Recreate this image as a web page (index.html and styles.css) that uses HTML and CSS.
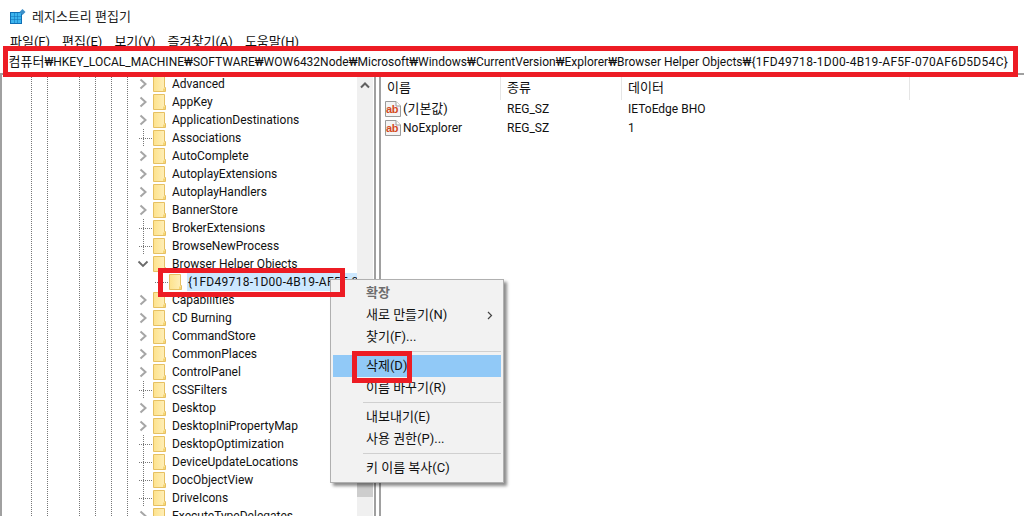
FILE: index.html
```html
<!DOCTYPE html>
<html lang="ko">
<head>
<meta charset="utf-8">
<title>레지스트리 편집기</title>
<link rel="stylesheet" href="styles.css">
</head>
<body>
<svg class="defs" width="0" height="0" aria-hidden="true">
  <defs>
    <linearGradient id="fg" x1="0" y1="0" x2="1" y2="0">
      <stop offset="0" stop-color="#fde28c"/><stop offset="1" stop-color="#fff0bd"/>
    </linearGradient>
    <symbol id="folder" viewBox="0 0 13 16">
      <path d="M.5.5H11.5V11.5H12.5V15.5H.5Z" fill="url(#fg)" stroke="#e6c062"/>
      <path d="M10 15V12.5H12V15Z" fill="#f6d675"/>
    </symbol>
    <symbol id="closed" viewBox="0 0 10 12"><path d="M2.5 1.5 7.5 6 2.5 10.5" fill="none" stroke="#a6a6a6" stroke-width="2"/></symbol>
    <symbol id="open" viewBox="0 0 12 10"><path d="M1.5 2.5 6 7 10.5 2.5" fill="none" stroke="#6a6a6a" stroke-width="1.8"/></symbol>
    <symbol id="ab" viewBox="0 0 16 16">
      <path d="M.5.5H11L15.5 5V15.5H.5Z" fill="#f4f4f4" stroke="#9a9a9a"/>
      <path d="M11 .5V5H15.5" fill="#fff" stroke="#9a9a9a"/>
    </symbol>
  </defs>
</svg>
<div class="window">
  <header class="titlebar">
    <svg class="appicon" viewBox="0 0 16 15" width="16" height="15" aria-hidden="true">
      <rect x="0" y="3" width="12" height="12" fill="#0f6fb5"/>
      <g fill="#3cb4ee">
        <rect x="1" y="4" width="3" height="3"/><rect x="4.500" y="4" width="3" height="3"/><rect x="8" y="4" width="3" height="3"/>
        <rect x="1" y="7.500" width="3" height="3"/><rect x="4.500" y="7.500" width="3" height="3"/><rect x="8" y="7.500" width="3" height="3"/>
        <rect x="1" y="11" width="3" height="3"/><rect x="4.500" y="11" width="3" height="3"/><rect x="8" y="11" width="3" height="3"/>
      </g>
      <path d="M12.500 0 15.500 3 12.500 6 9.500 3Z" fill="#3d8fc8"/>
    </svg>
    <span class="title">레지스트리 편집기</span>
  </header>
  <nav class="menubar">
    <span>파일(F)</span><span>편집(E)</span><span>보기(V)</span><span>즐겨찾기(A)</span><span>도움말(H)</span>
  </nav>
  <div class="address"><span class="path"><span class="ko">컴퓨터</span>₩HKEY_LOCAL_MACHINE₩SOFTWARE₩WOW6432Node₩Microsoft₩Windows₩CurrentVersion₩Explorer₩Browser Helper Objects₩<span class="guid">{1FD49718-1D00-4B19-AF5F-070AF6D5D54C}</span></span></div>
  <main class="panes">
    <section class="tree">
      <div class="row"><span class="twist"><svg class="chev"><use href="#closed"/></svg></span><svg class="folder"><use href="#folder"/></svg><span class="label">Advanced</span></div>
      <div class="row"><span class="twist"><svg class="chev"><use href="#closed"/></svg></span><svg class="folder"><use href="#folder"/></svg><span class="label">AppKey</span></div>
      <div class="row"><span class="twist"><svg class="chev"><use href="#closed"/></svg></span><svg class="folder"><use href="#folder"/></svg><span class="label">ApplicationDestinations</span></div>
      <div class="row"><span class="twist leaf"></span><svg class="folder"><use href="#folder"/></svg><span class="label">Associations</span></div>
      <div class="row"><span class="twist"><svg class="chev"><use href="#closed"/></svg></span><svg class="folder"><use href="#folder"/></svg><span class="label">AutoComplete</span></div>
      <div class="row"><span class="twist"><svg class="chev"><use href="#closed"/></svg></span><svg class="folder"><use href="#folder"/></svg><span class="label">AutoplayExtensions</span></div>
      <div class="row"><span class="twist"><svg class="chev"><use href="#closed"/></svg></span><svg class="folder"><use href="#folder"/></svg><span class="label">AutoplayHandlers</span></div>
      <div class="row"><span class="twist"><svg class="chev"><use href="#closed"/></svg></span><svg class="folder"><use href="#folder"/></svg><span class="label">BannerStore</span></div>
      <div class="row"><span class="twist leaf"></span><svg class="folder"><use href="#folder"/></svg><span class="label">BrokerExtensions</span></div>
      <div class="row"><span class="twist leaf"></span><svg class="folder"><use href="#folder"/></svg><span class="label">BrowseNewProcess</span></div>
      <div class="row"><span class="twist"><svg class="chevopen"><use href="#open"/></svg></span><svg class="folder"><use href="#folder"/></svg><span class="label">Browser Helper Objects</span></div>
      <div class="row child"><span class="twist leaf"></span><svg class="folder"><use href="#folder"/></svg><span class="label selected guid">{1FD49718-1D00-4B19-AF5F-070AF6D5D54C}</span></div>
      <div class="row"><span class="twist"><svg class="chev"><use href="#closed"/></svg></span><svg class="folder"><use href="#folder"/></svg><span class="label">Capabilities</span></div>
      <div class="row"><span class="twist"><svg class="chev"><use href="#closed"/></svg></span><svg class="folder"><use href="#folder"/></svg><span class="label">CD Burning</span></div>
      <div class="row"><span class="twist"><svg class="chev"><use href="#closed"/></svg></span><svg class="folder"><use href="#folder"/></svg><span class="label">CommandStore</span></div>
      <div class="row"><span class="twist"><svg class="chev"><use href="#closed"/></svg></span><svg class="folder"><use href="#folder"/></svg><span class="label">CommonPlaces</span></div>
      <div class="row"><span class="twist"><svg class="chev"><use href="#closed"/></svg></span><svg class="folder"><use href="#folder"/></svg><span class="label">ControlPanel</span></div>
      <div class="row"><span class="twist leaf"></span><svg class="folder"><use href="#folder"/></svg><span class="label">CSSFilters</span></div>
      <div class="row"><span class="twist"><svg class="chev"><use href="#closed"/></svg></span><svg class="folder"><use href="#folder"/></svg><span class="label">Desktop</span></div>
      <div class="row"><span class="twist"><svg class="chev"><use href="#closed"/></svg></span><svg class="folder"><use href="#folder"/></svg><span class="label">DesktopIniPropertyMap</span></div>
      <div class="row"><span class="twist leaf"></span><svg class="folder"><use href="#folder"/></svg><span class="label">DesktopOptimization</span></div>
      <div class="row"><span class="twist leaf"></span><svg class="folder"><use href="#folder"/></svg><span class="label">DeviceUpdateLocations</span></div>
      <div class="row"><span class="twist leaf"></span><svg class="folder"><use href="#folder"/></svg><span class="label">DocObjectView</span></div>
      <div class="row"><span class="twist leaf"></span><svg class="folder"><use href="#folder"/></svg><span class="label">DriveIcons</span></div>
      <div class="row"><span class="twist"><svg class="chev"><use href="#closed"/></svg></span><svg class="folder"><use href="#folder"/></svg><span class="label">ExecuteTypeDelegates</span></div>
    </section>
    <div class="scrollbar">
      <div class="arrow"><svg viewBox="0 0 10 7" width="10" height="7" aria-hidden="true"><path d="M1 5.500 5 1.500 9 5.500" fill="none" stroke="#606060" stroke-width="2"/></svg></div>
      <div class="thumb"></div>
    </div>
    <div class="splitter"></div>
    <section class="values">
      <div class="headers"><span>이름</span><span>종류</span><span>데이터</span></div>
      <div class="value">
        <span class="name"><span class="abicon"><svg><use href="#ab"/></svg><b>ab</b></span><span class="ko">(기본값)</span></span><span>REG_SZ</span><span>IEToEdge BHO</span>
      </div>
      <div class="value">
        <span class="name"><span class="abicon"><svg><use href="#ab"/></svg><b>ab</b></span>NoExplorer</span><span>REG_SZ</span><span>1</span>
      </div>
    </section>
  </main>
</div>
<div class="menu">
  <div class="item strong">확장</div>
  <div class="item sub">새로 만들기(N)<svg viewBox="0 0 6 9" width="6" height="9" aria-hidden="true"><path d="M1 1 4.500 4.500 1 8" fill="none" stroke="#444" stroke-width="1.200"/></svg></div>
  <div class="item">찾기(F)...</div>
  <div class="sep"></div>
  <div class="item hot">삭제(D)</div>
  <div class="item">이름 바꾸기(R)</div>
  <div class="sep"></div>
  <div class="item">내보내기(E)</div>
  <div class="item">사용 권한(P)...</div>
  <div class="sep"></div>
  <div class="item">키 이름 복사(C)</div>
</div>
<div class="mark mark-address"></div>
<div class="mark mark-key"></div>
<div class="mark mark-delete"></div>
</body>
</html>
```
FILE: styles.css
```css
* { box-sizing: border-box; }
html, body { margin: 0; padding: 0; }
body {
  width: 1024px;
  height: 516px;
  overflow: hidden;
  position: relative;
  background: #fff;
  color: #111;
  font: 12px/18px Roboto, "Noto Sans CJK KR", sans-serif;
}
.ko { font-size: 13px; }
.guid { letter-spacing: .3px; }
.defs { position: absolute; }
.window { display: flex; flex-direction: column; height: 516px; }

.titlebar { height: 32px; display: flex; align-items: center; gap: 6px; padding: 1px 0 0 10px; flex: none; }
.appicon { flex: none; }
.title { color: #222; font-size: 13px; }

.menubar { height: 15px; flex: none; display: flex; gap: 12px; padding: 1px 0 0 10px; line-height: 18px; font-size: 13px; }

.address {
  height: 26px;
  flex: none;
  display: flex;
  justify-content: flex-end;
  align-items: center;
  padding: 3px 16px 0 0;
  overflow: hidden;
  white-space: nowrap;
  background: #fff;
  position: relative;
}
.path { flex: none; }

.panes {
  flex: 1;
  min-height: 0;
  display: flex;
  border-top: 2px solid #a0a0a0;
  border-left: 2px solid #a0a0a0;
  overflow: hidden;
}

.tree {
  width: 355px;
  flex: none;
  overflow: hidden;
  background-image:
    linear-gradient(#777 50%, transparent 50%),
    linear-gradient(#777 50%, transparent 50%),
    linear-gradient(#777 50%, transparent 50%),
    linear-gradient(#777 50%, transparent 50%),
    linear-gradient(#777 50%, transparent 50%),
    linear-gradient(#777 50%, transparent 50%);
  background-size: 1px 2px;
  background-repeat: repeat-y;
  background-position: 29px 0, 45px 0, 77px 0, 93px 0, 109px 0, 125px 0;
}
.row { height: 18px; display: flex; align-items: center; padding-left: 136px; white-space: nowrap; }
.row.child { padding-left: 152px; }
.twist { width: 15px; height: 18px; flex: none; display: flex; align-items: center; }
.chev { width: 10px; height: 12px; }
.chevopen { width: 12px; height: 10px; margin-left: -1px; }
.leaf {
  background-image:
    linear-gradient(#777 50%, transparent 50%),
    linear-gradient(90deg, #777 50%, transparent 50%);
  background-size: 1px 2px, 2px 1px;
  background-repeat: repeat-y, repeat-x;
  background-position: 5px 0, 5px 9px;
}
.folder { width: 13px; height: 16px; flex: none; }
.label { margin-left: 6px; }
.selected { flex: 1; margin-left: 5px; padding-left: 1px; background: #cce8ff; overflow: hidden; }

.scrollbar { width: 16px; flex: none; background: #f0f0f0; display: flex; flex-direction: column; }
.arrow { height: 20px; display: flex; align-items: center; justify-content: center; flex: none; }
.thumb { margin-top: 304px; height: 98px; background: #cdcdcd; flex: none; }

.splitter { width: 7px; flex: none; border-left: 2px solid #a0a0a0; border-right: 2px solid #a0a0a0; margin-left: 1px; background: #fff; }

.values { flex: 1; min-width: 0; }
.headers, .value { display: grid; grid-template-columns: 120px 121px 288px; }
.headers { height: 24px; align-items: center; padding-top: 1px; }
.headers span { height: 24px; line-height: 24px; padding-left: 6px; border-right: 1px solid #e5e5e5; font-size: 13px; }
.value { height: 19px; align-items: center; }
.value > span { padding-left: 6px; white-space: nowrap; }
.value > span.name { padding-left: 4px; display: flex; align-items: center; gap: 2px; }
.abicon { width: 16px; height: 16px; display: block; position: relative; flex: none; }
.abicon svg { width: 16px; height: 16px; display: block; }
.abicon b {
  position: absolute;
  left: 1px;
  top: 3px;
  font: bold 11px/10px "Liberation Sans", sans-serif;
  color: #d34a1f;
  letter-spacing: -.3px;
}

.menu {
  position: absolute;
  left: 330px;
  top: 279px;
  width: 174px;
  height: 204px;
  padding: 2px;
  background: #f2f2f2;
  border: 1px solid #b0b0b0;
  box-shadow: 3px 3px 3px rgba(0, 0, 0, .45);
  font-size: 13px;
}
.item { height: 22px; line-height: 22px; padding-left: 33px; position: relative; }
.strong { font-weight: 700; color: #6d6d6d; }
.sub svg { position: absolute; right: 8px; top: 7px; }
.hot { background: #91c9f7; }
.sep { height: 1px; background: #d0d0d0; margin: 3px 0 3px 30px; }

.mark { position: absolute; border: 5px solid #ed1c24; pointer-events: none; }
.mark-address { left: 3px; top: 46px; width: 1015px; height: 31px; }
.mark-key { left: 158px; top: 268px; width: 187px; height: 29px; }
.mark-delete { left: 352px; top: 351px; width: 60px; height: 32px; }
```
